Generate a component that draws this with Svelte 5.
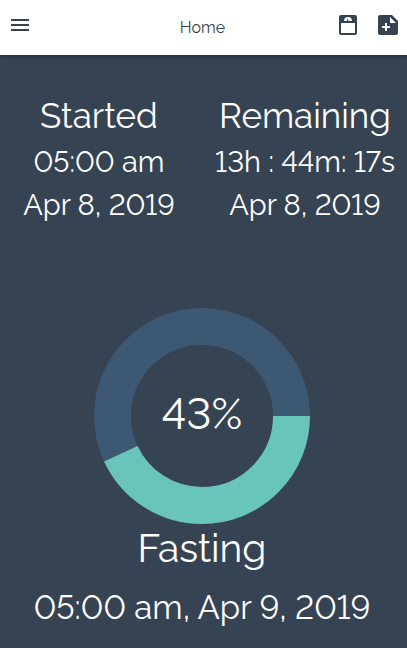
<script>
  const percent = 43;
  const radius = 89.5;
  const circumference = 2 * Math.PI * radius;
  const filled = (circumference * percent) / 100;
</script>

<div class="page">
  <header>
    <button type="button" aria-label="Menu">
      <svg viewBox="0 0 24 24"><path d="M3 18h18v-2H3v2zm0-5h18v-2H3v2zm0-7v2h18V6H3z" /></svg>
    </button>
    <h1>Home</h1>
    <div class="actions">
      <button type="button" aria-label="Weight">
        <svg viewBox="0 0 24 24">
          <path d="M5 2H19A2 2 0 0 1 21 4V20A2 2 0 0 1 19 22H5A2 2 0 0 1 3 20V4A2 2 0 0 1 5 2M12 4A4 4 0 0 0 8 8H11.260L10.850 5.230L12.900 8H16A4 4 0 0 0 12 4M5 10V20H19V10H5Z" />
        </svg>
      </button>
      <button type="button" aria-label="Add entry">
        <svg viewBox="0 0 24 24">
          <path fill-rule="evenodd" d="M4 2h12l6 6v12a2 2 0 0 1-2 2H4a2 2 0 0 1-2-2V4a2 2 0 0 1 2-2zM14 4v6h6zM9 10v3H6v2h3v3h2v-3h3v-2h-3v-3z" />
        </svg>
      </button>
    </div>
  </header>

  <main>
    <div class="times">
      <section>
        <h2>Started</h2>
        <p>05:00 am</p>
        <p>Apr 8, 2019</p>
      </section>
      <section>
        <h2>Remaining</h2>
        <p>13h : 44m: 17s</p>
        <p>Apr 8, 2019</p>
      </section>
    </div>

    <div class="progress">
      <svg viewBox="0 0 216 216" aria-hidden="true">
        <circle class="track" cx="108" cy="108" r={radius} />
        <circle class="value" cx="108" cy="108" r={radius} stroke-dasharray="{filled} {circumference}" />
      </svg>
      <span>{percent}%</span>
    </div>

    <section class="status">
      <h2>Fasting</h2>
      <p>05:00 am, Apr 9, 2019</p>
    </section>
  </main>
</div>

<style>
  :global(body) {
    margin: 0;
    background: #364352;
  }
  .page {
    min-height: 100vh;
    background: #364352;
    color: #fff;
    font-family: Raleway, Lato, sans-serif;
    font-variant-numeric: lining-nums;
  }
  h1, h2, p {
    margin: 0;
    font-weight: 400;
  }
  header {
    position: relative;
    display: grid;
    grid-template-columns: 1fr auto 1fr;
    align-items: center;
    height: 55px;
    padding: 0 7px 0 8px;
    box-sizing: border-box;
    background: #fff;
    color: #364352;
    box-shadow: 0 1px 4px rgba(0, 0, 0, 0.4);
  }
  h1 {
    padding-right: 3px;
    font-size: 16px;
    line-height: 24px;
  }
  button {
    display: block;
    width: 24px;
    height: 24px;
    margin-bottom: 5px;
    padding: 0;
    border: 0;
    background: none;
    color: inherit;
    cursor: pointer;
  }
  button svg {
    display: block;
    width: 24px;
    height: 24px;
    fill: currentColor;
  }
  .actions {
    display: flex;
    justify-content: flex-end;
    gap: 16px;
  }
  main {
    padding: 37px 3px 15px 0;
    text-align: center;
  }
  .times {
    display: grid;
    grid-template-columns: 1fr 1fr;
    gap: 8px;
    white-space: nowrap;
  }
  h2 {
    font-size: 35px;
    line-height: 48px;
  }
  .times h2 {
    margin-bottom: 1px;
  }
  .times p {
    font-size: 29px;
    line-height: 43px;
  }
  .progress {
    display: grid;
    place-items: center;
    margin-top: 81px;
  }
  .progress > * {
    grid-area: 1 / 1;
  }
  .progress svg {
    width: 216px;
    height: 216px;
  }
  circle {
    fill: none;
    stroke-width: 37;
  }
  .track {
    stroke: #3d5873;
  }
  .value {
    stroke: #69c4b9;
  }
  .progress span {
    margin-bottom: 4px;
    font-size: 43px;
    line-height: 48px;
  }
  .status h2 {
    font-size: 39px;
  }
  .status p {
    margin-top: 12px;
    font-size: 33px;
    line-height: 48px;
  }
</style>
